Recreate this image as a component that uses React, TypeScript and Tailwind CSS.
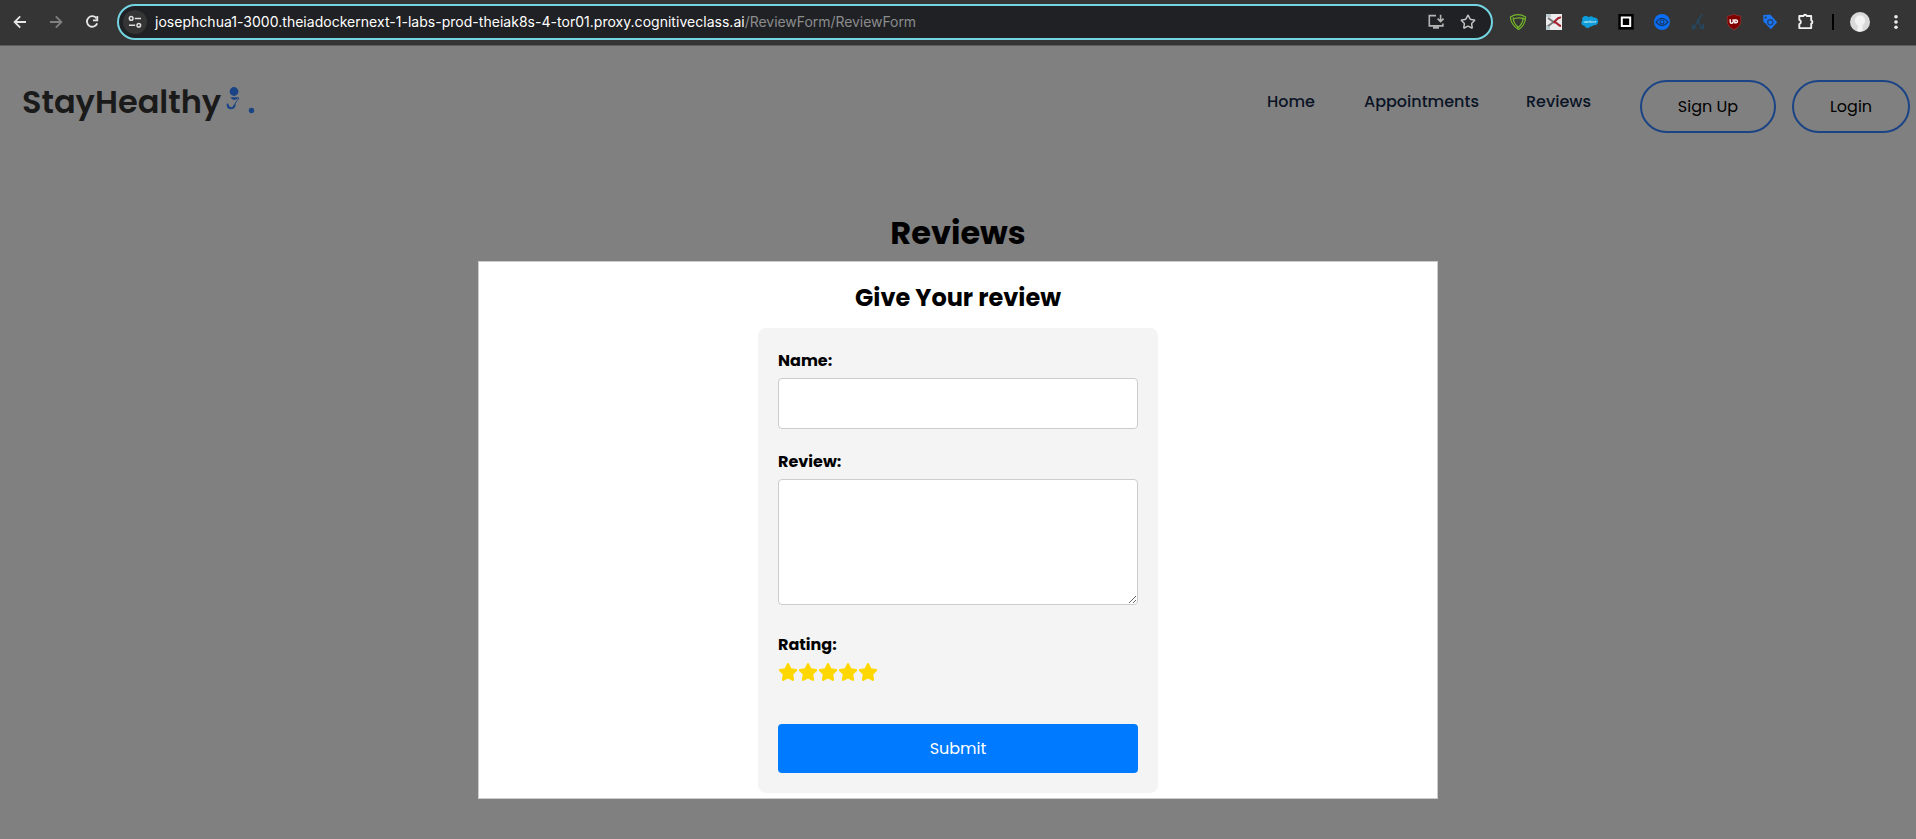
import React from "react";
import { Star as StarOutline } from "lucide-react";
import { FaStar } from "react-icons/fa6";

const svgBase = { width: 20, height: 20, viewBox: "0 0 20 20", fill: "none" } as const;

function BrowserBar() {
  return (
    <div className="flex h-[46px] items-start border-b border-[#5c5c5c] bg-[#353535] pt-1 font-['Inter',sans-serif]">
      <div className="flex h-9 w-[117px] items-center pl-[10px]">
        <svg {...svgBase} className="mr-4" stroke="#e6e6e6" strokeWidth="1.8">
          <path d="M16 10H4.8M10.2 4.4 4.6 10l5.6 5.6" />
        </svg>
        <svg {...svgBase} className="mr-4" stroke="#808080" strokeWidth="1.8">
          <path d="M4 10h11.2M9.8 4.4 15.4 10l-5.6 5.6" />
        </svg>
        <svg {...svgBase} stroke="#e6e6e6" strokeWidth="1.8">
          <path d="M14.6 6.4A5.3 5.3 0 1 0 15.2 11.4" />
          <path d="M15.3 4v4.3H11" />
        </svg>
      </div>
      <div className="flex h-9 w-[1376px] items-center rounded-full border-2 border-[#74d4e2] bg-[#202124] pl-1 pr-[13px]">
        <div className="mr-2 flex size-6 items-center justify-center rounded-full bg-[#353535]">
          <svg width="14" height="14" viewBox="0 0 14 14" fill="none" stroke="#e0e0e0" strokeWidth="1.5">
            <circle cx="3.2" cy="3.4" r="1.8" />
            <path d="M6.8 3.4H13M1 10.2h6.2" />
            <circle cx="10.8" cy="10.2" r="1.8" />
          </svg>
        </div>
        <div className="grow whitespace-nowrap text-[14px] leading-5 text-white">
          <span className="tracking-[0.025px]">josephchua1-3000.theiadockernext-1-labs-prod-theiak8s-4-tor01.proxy.cognitiveclass.ai</span>
          <span className="tracking-[-0.05px] text-[#8b8c8e]">/ReviewForm/ReviewForm</span>
        </div>
        <svg {...svgBase} className="mr-3" stroke="#b4b4b4" strokeWidth="1.6">
          <path d="M10 3.6H3.3v10.3h13.6v-2.4M14.6 2.8v6.4M11.6 6.6l3 3 3-3" />
          <path d="M7 15.5h6" strokeWidth="2.4" />
        </svg>
        <StarOutline size={16} strokeWidth={2.2} strokeLinejoin="miter" className="mx-0.5 text-[#c4c4c4]" />
      </div>
      <div className="flex h-9 items-center pl-[15px]">
        <div className="flex gap-4">
          <svg {...svgBase} stroke="#76b82a" strokeWidth="1.2">
            <path d="M2.4 5Q10 .4 17.6 5Q17.4 13 10.6 17.6Q3 13 2.4 5Z" />
            <path d="M4.8 7.4Q10 4.4 17 7.2M5.2 5.2Q5 11.4 10.6 15.4M15.2 5.4Q15 12 9 16.6" />
          </svg>
          <svg {...svgBase}>
            <path fill="#ececec" d="M2 2h16v16H2z" />
            <path fill="#bccbd0" d="M2 2h5v3H2zM2 13h4v5H2z" />
            <path stroke="#777" strokeWidth="2" d="m4 6 7 5M4 14l7-5" />
            <path stroke="#a51f2d" strokeWidth="2" d="M17 5.6c-3-.8-4 1.5-6.5 4.4 3.5 1 3.5 3.6 6.5 4.1" />
          </svg>
          <svg {...svgBase}>
            <path
              fill="#0d9dda"
              d="M8.6 5.3a3.6 3.6 0 0 1 5 .3 3.5 3.5 0 0 1 4.4 3.5 3.4 3.4 0 0 1-4.3 4 3 3 0 0 1-3.4 1.3 3.4 3.4 0 0 1-6-.7 3 3 0 0 1-1.9-5.3 3.5 3.5 0 0 1 6.2-3.1Z"
            />
            <text x="3.6" y="10.8" fontSize="2.5" fill="#fff">salesforce</text>
          </svg>
          <svg {...svgBase}>
            <path fill="#000" d="M2.3 2h15.4v15.6H2.3z" />
            <path stroke="#fff" strokeWidth="2" d="M5.8 5.6h8.4v8.4H5.8z" />
          </svg>
          <svg {...svgBase}>
            <circle cx="10" cy="10" r="8" fill="#0b6ff5" />
            <path stroke="#123a70" strokeWidth="1.2" d="M4 10q6-7.2 12 0-6 7.2-12 0Z" />
            <circle cx="10" cy="10" r="2" stroke="#123a70" strokeWidth="1.1" />
          </svg>
          <svg {...svgBase} stroke="#234a66" strokeWidth="1.4">
            <path d="M14 2.2c-1 3-3.2 3.7-4.2 6.3-.8 2.5-1.4 5-4.8 7.5M10.2 8.5c.4 3 2 5.5 4.6 7.5M4.8 12.4 4.4 16.2l4 .2M15.2 12l.4 4.2-4 .2" />
          </svg>
          <svg {...svgBase}>
            <path fill="#800000" stroke="#9e4040" strokeWidth=".6" d="M10 2.2Q13.5 4 16.8 4v5.5q0 5-6.8 8.2-6.8-3.2-6.8-8.2V4Q6.5 4 10 2.2Z" />
            <path stroke="#fff" strokeWidth="1.4" d="M6.2 7.3v2.6q0 1.4 1.4 1.4t1.6-1.4V7.3M10.8 7.9h1.1q1.6 0 1.6 1.4T12 10.7h-1.2Z" />
          </svg>
          <svg {...svgBase}>
            <path fill="#1b74f2" d="m3.2 3 7-.4 7 7.6-6.3 7-7.5-7.6Z" />
            <circle cx="5.6" cy="5.4" r="1" fill="#353535" />
            <circle cx="10.3" cy="10.3" r="2.6" stroke="#20467f" strokeWidth="1.4" />
          </svg>
          <svg {...svgBase} stroke="#f0f0f0" strokeWidth="1.9" strokeLinejoin="round">
            <path d="M3.3 4h4.2a1.7 1.7 0 0 1 3.3 0h4.4v4.3a1.8 1.8 0 0 1 0 3.4v4.4H3.3v-4a2.2 2.2 0 0 0 0-4.2Z" />
          </svg>
        </div>
        <div className="ml-4 h-4 w-0.5 bg-black" />
        <svg {...svgBase} className="ml-4">
          <circle cx="10" cy="10" r="10" fill="#d9d9d9" />
          <path fill="#f2f3f2" d="M10 3.5c3 0 5 2 5 5 0 2.4-1 4-2.4 4.8v5.8Q9.5 20 7 19l1-5.4C6.3 12.8 5 11 5 8.5c0-3 2-5 5-5Z" />
        </svg>
        <svg {...svgBase} className="ml-4" fill="#ededed">
          <circle cx="10" cy="4.7" r="1.8" />
          <circle cx="10" cy="10" r="1.8" />
          <circle cx="10" cy="15.3" r="1.8" />
        </svg>
      </div>
    </div>
  );
}

function SiteHeader() {
  return (
    <header className="flex h-[100px] items-start">
      <div className="flex w-[1267px] items-start pl-[22px] pt-[34px]">
        <span className="w-[200px] whitespace-nowrap text-[32px] font-semibold leading-[44px] text-[#1a1a1a]">
          StayHealthy
        </span>
        <svg width="34" height="28" viewBox="0 0 34 28" className="ml-1 mt-1.5" fill="#1b4486">
          <circle cx="8" cy="5.5" r="4.4" />
          <path d="M4.5 11.2h7.8c-1.3 3.4-6.4 3.4-7.8 0Z" />
          <path d="M12.5 11.5c.4 3-2.4 3.4-3.2 5.5-.6 2-.8 4.6-3.3 5.6" fill="none" stroke="#1b4486" strokeWidth="1" />
          <path d="M1.6 18.4c.2 5 6 5 7 .8" fill="none" stroke="#1b4486" strokeWidth="2" strokeLinecap="round" />
          <circle cx="25.5" cy="24.5" r="2.7" />
        </svg>
      </div>
      <nav className="flex items-start pt-11 text-base font-medium leading-6 text-[#0a1426]">
        <a className="w-[97px] whitespace-nowrap">Home</a>
        <a className="w-[162px] whitespace-nowrap">Appointments</a>
        <a className="w-[114px] whitespace-nowrap">Reviews</a>
      </nav>
      <div className="flex gap-4 pt-[34px] text-base text-black">
        <button className="h-[53px] w-[136px] rounded-[28px] border-2 border-[#1b4486]">Sign Up</button>
        <button className="h-[53px] w-[118px] rounded-[28px] border-2 border-[#1b4486]">Login</button>
      </div>
    </header>
  );
}

function ReviewDialog() {
  return (
    <section className="flex h-[538px] w-[960px] flex-col items-center border border-[#ccc] bg-white pt-[18px]">
      <h2 className="h-[48px] whitespace-nowrap text-2xl font-bold leading-9">Give Your review</h2>
      <form className="flex h-[465px] w-[400px] flex-col rounded-lg bg-[#f4f4f4] px-5 pt-5">
        <label className="h-[30px] font-bold leading-[26px]">Name:</label>
        <input className="h-[51px] rounded border border-[#ccc] bg-white" />
        <label className="mt-5 h-[30px] font-bold leading-[26px]">Review:</label>
        <textarea className="h-[126px] resize-y rounded border border-[#ccc] bg-white" />
        <div className="mt-[27px] h-[30px] font-bold leading-[26px]">Rating:</div>
        <div className="flex h-[62px]">
          {[1, 2, 3, 4, 5].map((n) => (
            <FaStar key={n} size={20} className="text-[#ffd700]" />
          ))}
        </div>
        <button type="button" className="h-[49px] rounded bg-[#007bff] text-white">
          Submit
        </button>
      </form>
    </section>
  );
}

export default function App() {
  return (
    <div className="h-[839px] w-[1916px] overflow-hidden bg-[#808080] font-['Poppins','Inter',sans-serif] text-black">
      <BrowserBar />
      <SiteHeader />
      <main className="flex flex-col items-center pt-[63px]">
        <h1 className="h-[52px] text-[32px] font-bold leading-[48px]">Reviews</h1>
        <ReviewDialog />
      </main>
    </div>
  );
}
